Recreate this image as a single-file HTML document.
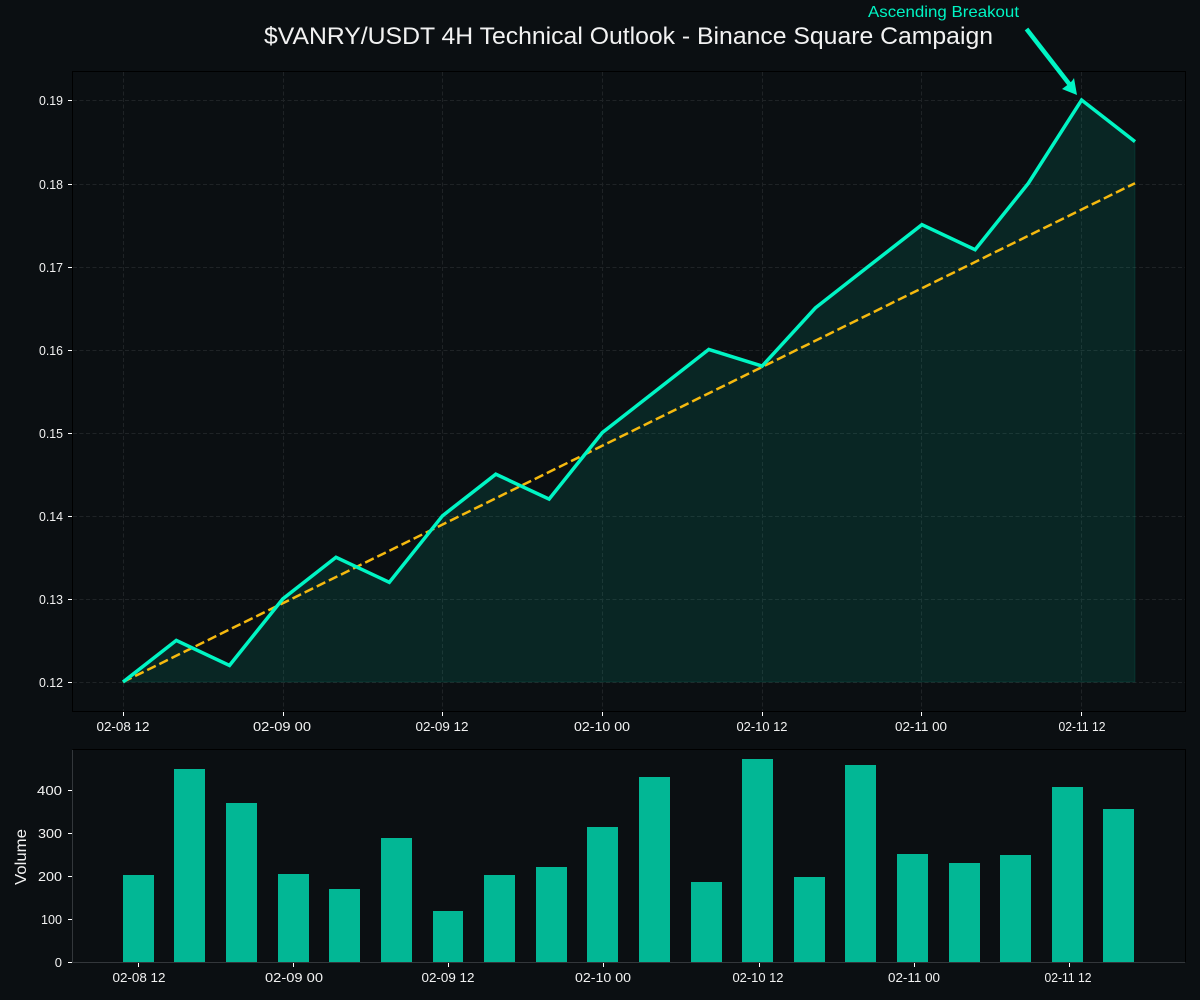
<!DOCTYPE html>
<html><head><meta charset="utf-8"><style>
html,body{margin:0;padding:0;background:#0b0f12;width:1200px;height:1000px;overflow:hidden}
svg{display:block}
text{font-family:"Liberation Sans",sans-serif;fill:#f2f2f2}
.s{font-size:13px}
</style></head><body>
<svg width="1200" height="1000" viewBox="0 0 1200 1000" xmlns="http://www.w3.org/2000/svg">
<rect width="1200" height="1000" fill="#0b0f12"/>
<text x="264" y="44" font-size="24" textLength="729" lengthAdjust="spacingAndGlyphs" fill="#fff">$VANRY/USDT 4H Technical Outlook - Binance Square Campaign</text>
<text x="868" y="17" font-size="16" textLength="151" lengthAdjust="spacingAndGlyphs" style="fill:#00f5c4">Ascending Breakout</text>

<g stroke="#1f2326" stroke-width="1" stroke-dasharray="4 2.5" fill="none">
<path d="M73 100.5H1185M73 184.5H1185M73 267.5H1185M73 350.5H1185M73 433.5H1185M73 516.5H1185M73 599.5H1185M73 682.5H1185"/>
<path d="M123.5 72V711M283.5 72V711M442.5 72V711M602.5 72V711M762.5 72V711M921.5 72V711M1081.5 72V711"/>
</g>
<path d="M123 682 L176.3 640.4 L229.5 665.4 L282.8 598.9 L336 557.3 L389.3 582.3 L442.6 515.7 L495.8 474.2 L549.1 499.1 L602.3 432.6 L655.6 391 L708.8 349.4 L762.1 366.1 L815.4 307.9 L868.6 266.3 L921.9 224.7 L975.1 249.7 L1028.4 183.2 L1081.6 100 L1135 141.6 L1135 682 Z" fill="#00f5c4" fill-opacity=".1" stroke="#00f5c4" stroke-opacity=".1"/>
<path d="M123 682 L1135 183.2" stroke="#f5b90f" stroke-width="2.5" stroke-dasharray="9.5 4" fill="none"/>
<path d="M123 682 L176.3 640.4 L229.5 665.4 L282.8 598.9 L336 557.3 L389.3 582.3 L442.6 515.7 L495.8 474.2 L549.1 499.1 L602.3 432.6 L655.6 391 L708.8 349.4 L762.1 366.1 L815.4 307.9 L868.6 266.3 L921.9 224.7 L975.1 249.7 L1028.4 183.2 L1081.6 100 L1135 141.6" stroke="#00f5c4" stroke-width="3.5" fill="none" stroke-linejoin="miter"/>
<rect x="72.5" y="71.5" width="1113" height="640" fill="none" stroke="#000" stroke-width="1"/>

<path d="M1026.5 29 L1070 85" stroke="#00f5c4" stroke-width="4.5" fill="none"/>
<path d="M1077 95 L1062 89 L1068 84.5 L1072 81 L1074 78 Z" fill="#00f5c4"/>

<g stroke="#fff" stroke-width="1" fill="none">
<path d="M68 100.5h4M68 184.5h4M68 267.5h4M68 350.5h4M68 433.5h4M68 516.5h4M68 599.5h4M68 682.5h4"/>
<path d="M123.5 712v4M283.5 712v4M442.5 712v4M602.5 712v4M762.5 712v4M921.5 712v4M1081.5 712v4"/>
<path d="M68 790.5h4M68 833.5h4M68 876.5h4M68 919.5h4M68 962.5h4"/>
<path d="M138.5 963v4M293.5 963v4M448.5 963v4M603.5 963v4M759.5 963v4M914.5 963v4M1069.5 963v4"/>
</g>
<g class="s" text-anchor="end">
<text x="63" y="105" textLength="24" lengthAdjust="spacingAndGlyphs">0.19</text>
<text x="63" y="189" textLength="24" lengthAdjust="spacingAndGlyphs">0.18</text>
<text x="63" y="272" textLength="24" lengthAdjust="spacingAndGlyphs">0.17</text>
<text x="63" y="355" textLength="24" lengthAdjust="spacingAndGlyphs">0.16</text>
<text x="63" y="438" textLength="24" lengthAdjust="spacingAndGlyphs">0.15</text>
<text x="63" y="521" textLength="24" lengthAdjust="spacingAndGlyphs">0.14</text>
<text x="63" y="604" textLength="24" lengthAdjust="spacingAndGlyphs">0.13</text>
<text x="63" y="687" textLength="24" lengthAdjust="spacingAndGlyphs">0.12</text>
</g>
<g class="s" text-anchor="middle">
<text x="123" y="731" textLength="53" lengthAdjust="spacingAndGlyphs">02-08 12</text>
<text x="282" y="731" textLength="58" lengthAdjust="spacingAndGlyphs">02-09 00</text>
<text x="442" y="731" textLength="53" lengthAdjust="spacingAndGlyphs">02-09 12</text>
<text x="602" y="731" textLength="56" lengthAdjust="spacingAndGlyphs">02-10 00</text>
<text x="762" y="731" textLength="51" lengthAdjust="spacingAndGlyphs">02-10 12</text>
<text x="921" y="731" textLength="52" lengthAdjust="spacingAndGlyphs">02-11 00</text>
<text x="1082" y="731" textLength="47" lengthAdjust="spacingAndGlyphs">02-11 12</text>
<text x="139" y="982" textLength="53" lengthAdjust="spacingAndGlyphs">02-08 12</text>
<text x="294" y="982" textLength="58" lengthAdjust="spacingAndGlyphs">02-09 00</text>
<text x="448" y="982" textLength="53" lengthAdjust="spacingAndGlyphs">02-09 12</text>
<text x="603" y="982" textLength="56" lengthAdjust="spacingAndGlyphs">02-10 00</text>
<text x="758" y="982" textLength="51" lengthAdjust="spacingAndGlyphs">02-10 12</text>
<text x="914" y="982" textLength="52" lengthAdjust="spacingAndGlyphs">02-11 00</text>
<text x="1068" y="982" textLength="47" lengthAdjust="spacingAndGlyphs">02-11 12</text>
</g>
<g class="s" text-anchor="end">
<text x="62" y="795" textLength="25" lengthAdjust="spacingAndGlyphs">400</text>
<text x="62" y="838" textLength="24" lengthAdjust="spacingAndGlyphs">300</text>
<text x="62" y="881" textLength="24" lengthAdjust="spacingAndGlyphs">200</text>
<text x="62" y="924" textLength="21" lengthAdjust="spacingAndGlyphs">100</text>
<text x="62" y="967">0</text>
</g>
<text transform="translate(26 885) rotate(-90)" font-size="15.5" textLength="56" lengthAdjust="spacingAndGlyphs">Volume</text>

<path d="M72.5 749.5H1185.5V962" fill="none" stroke="#000" stroke-width="1"/>
<g fill="#02b795">
<rect x="123" y="875" width="31" height="87"/>
<rect x="174" y="769" width="31" height="193"/>
<rect x="226" y="803" width="31" height="159"/>
<rect x="278" y="874" width="31" height="88"/>
<rect x="329" y="889" width="31" height="73"/>
<rect x="381" y="838" width="31" height="124"/>
<rect x="433" y="911" width="30" height="51"/>
<rect x="484" y="875" width="31" height="87"/>
<rect x="536" y="867" width="31" height="95"/>
<rect x="587" y="827" width="31" height="135"/>
<rect x="639" y="777" width="31" height="185"/>
<rect x="691" y="882" width="31" height="80"/>
<rect x="742" y="759" width="31" height="203"/>
<rect x="794" y="877" width="31" height="85"/>
<rect x="845" y="765" width="31" height="197"/>
<rect x="897" y="854" width="31" height="108"/>
<rect x="949" y="863" width="31" height="99"/>
<rect x="1000" y="855" width="31" height="107"/>
<rect x="1052" y="787" width="31" height="175"/>
<rect x="1103" y="809" width="31" height="153"/>
</g>
<path d="M72.5 750V962.5H1185" fill="none" stroke="#33373b" stroke-width="1"/>
</svg>
</body></html>
